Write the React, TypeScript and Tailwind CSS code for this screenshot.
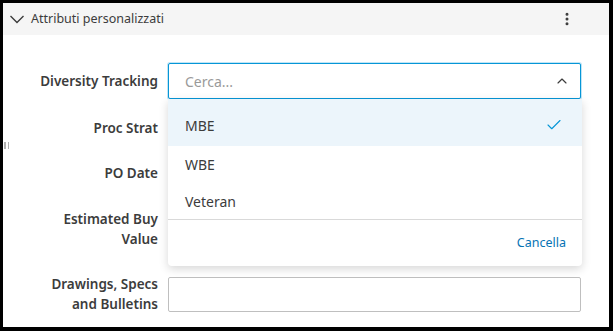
import { ChevronUp, Check, EllipsisVertical } from "lucide-react";

const font = { fontFamily: '"Noto Sans", "Open Sans", sans-serif' };

function Field({ label, className = "", children }: { label: React.ReactNode; className?: string; children?: React.ReactNode }) {
    return (
        <div className={`flex items-center ${className}`}>
            <div className="w-[135px] pr-[10px] text-right text-[13.5px] font-semibold leading-[20px] text-[#3c3c3c]">
                {label}
            </div>
            <div className="relative flex-1">{children}</div>
        </div>
    );
}

function Box() {
    return <div className="h-[35px] rounded-[2px] border border-[#bfbfbf] bg-white" />;
}

export default function App() {
    return (
        <div className="h-[331px] w-[613px] bg-black pb-[4px] pl-[3px] pr-[4px] pt-[3px]" style={font}>
            <div className="relative h-full bg-white">
                {/* Header */}
                <div className="flex h-[32px] items-center bg-[#f5f5f5] pl-[6px] pr-[34px]">
                    <svg width="16" height="10" viewBox="0 0 16 10" className="text-[#3c3c3c]">
                        <polyline points="1.5,2 8,8.5 14.5,2" fill="none" stroke="currentColor" strokeWidth="1.4" />
                    </svg>
                    <span className="ml-[6px] text-[12.5px] text-[#3c3c3c]">Attributi personalizzati</span>
                    <div className="flex-1" />
                    <EllipsisVertical className="h-[16px] w-[16px] text-[#3c3c3c]" strokeWidth={2.5} />
                </div>

                {/* resize handle */}
                <div className="absolute left-[1px] top-[139px] flex gap-[2px]">
                    <div className="h-[7px] w-[1.5px] bg-[#b0b0b0]" />
                    <div className="h-[7px] w-[1.5px] bg-[#b0b0b0]" />
                </div>

                {/* Form */}
                <div className="flex flex-col pl-[30px] pr-[28px] pt-[28px]">
                    <Field label="Diversity Tracking">
                        <div className="flex h-[36px] items-center rounded-[2px] border border-[#0696d7] bg-white pl-[16px] pr-[10px] shadow-[0_0_0_1px_rgba(6,150,215,0.25)]">
                            <span className="flex-1 text-[14px] text-[#9a9a9a]">Cerca...</span>
                            <ChevronUp className="h-[16px] w-[16px] text-[#3c3c3c]" strokeWidth={1.75} />
                        </div>

                        {/* Dropdown */}
                        <div className="absolute left-0 right-[-1px] top-[36px] z-10 rounded-b-[4px] bg-white shadow-[0_3px_10px_rgba(0,0,0,0.16)]">
                            <div className="flex h-[47px] items-center bg-[#ecf5fb] pl-[17px] pr-[19px] pt-[5px] text-[14px] text-[#3c3c3c]">
                                <span className="flex-1">MBE</span>
                                <Check className="h-[18px] w-[18px] text-[#0696d7]" strokeWidth={1.5} />
                            </div>
                            <div className="flex h-[37px] items-center pl-[17px] text-[14px] text-[#3c3c3c]">WBE</div>
                            <div className="flex h-[36px] items-center pl-[17px] text-[14px] text-[#3c3c3c]">Veteran</div>
                            <div className="flex h-[47px] items-center justify-end border-t border-[#d9d9d9] pr-[16px]">
                                <span className="text-[12.5px] text-[#0673b4]">Cancella</span>
                            </div>
                        </div>
                    </Field>
                    <Field label="Proc Strat" className="mt-[11px]">
                        <Box />
                    </Field>
                    <Field label="PO Date" className="mt-[10px]">
                        <Box />
                    </Field>
                    <Field label={<>Estimated Buy<br />Value</>} className="mt-[19px]">
                        <Box />
                    </Field>
                    <Field label={<>Drawings, Specs<br />and Bulletins</>} className="mt-[25px]">
                        <Box />
                    </Field>
                </div>
            </div>
        </div>
    );
}
